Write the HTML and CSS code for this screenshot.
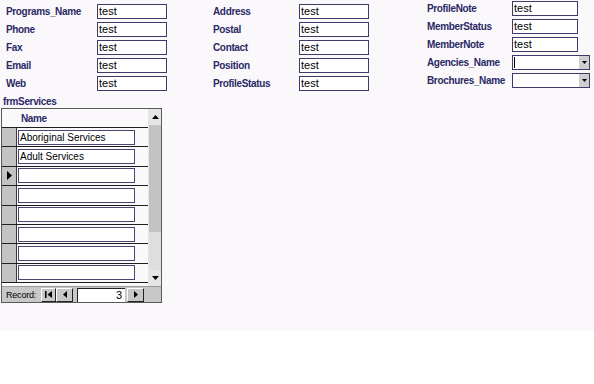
FILE: index.html
```html
<!DOCTYPE html>
<html>
<head>
    <title>Programs</title>
    <link rel="stylesheet" href="styles.css">
</head>
<body>
    <div class="page">
        <div class="fields">
            <div class="col col-a">
                <div class="lbl">Programs_Name</div><div class="box">test</div>
                <div class="lbl">Phone</div><div class="box">test</div>
                <div class="lbl">Fax</div><div class="box">test</div>
                <div class="lbl">Email</div><div class="box">test</div>
                <div class="lbl">Web</div><div class="box">test</div>
            </div>
            <div class="col col-b">
                <div class="lbl">Address</div><div class="box">test</div>
                <div class="lbl">Postal</div><div class="box">test</div>
                <div class="lbl">Contact</div><div class="box">test</div>
                <div class="lbl">Position</div><div class="box">test</div>
                <div class="lbl">ProfileStatus</div><div class="box">test</div>
            </div>
            <div class="col col-c">
                <div class="lbl">ProfileNote</div><div class="box">test</div>
                <div class="lbl">MemberStatus</div><div class="box">test</div>
                <div class="lbl">MemberNote</div><div class="box">test</div>
                <div class="lbl">Agencies_Name</div>
                <div class="combo">
                    <div class="combo-text"><span class="caret"></span></div>
                    <div class="combo-btn"><svg width="5" height="3" viewBox="0 0 5 3"><path d="M0 0h5L2.5 3z" fill="#000"/></svg></div>
                </div>
                <div class="lbl">Brochures_Name</div>
                <div class="combo">
                    <div class="combo-text"></div>
                    <div class="combo-btn"><svg width="5" height="3" viewBox="0 0 5 3"><path d="M0 0h5L2.5 3z" fill="#000"/></svg></div>
                </div>
            </div>
        </div>

        <div class="sub-title">frmServices</div>

        <div class="subform">
            <div class="sheet">
                <div class="rows">
                    <div class="row head">
                        <div class="sel"></div>
                        <div class="cell">Name</div>
                    </div>
                    <div class="row">
                        <div class="sel"></div>
                        <div class="cell"><div class="cbox">Aboriginal Services</div></div>
                    </div>
                    <div class="row">
                        <div class="sel"></div>
                        <div class="cell"><div class="cbox">Adult Services</div></div>
                    </div>
                    <div class="row">
                        <div class="sel current"><svg width="5" height="9" viewBox="0 0 5 9"><path d="M0 0L5 4.5L0 9z" fill="#000"/></svg></div>
                        <div class="cell"><div class="cbox"></div></div>
                    </div>
                    <div class="row">
                        <div class="sel"></div>
                        <div class="cell"><div class="cbox"></div></div>
                    </div>
                    <div class="row">
                        <div class="sel"></div>
                        <div class="cell"><div class="cbox"></div></div>
                    </div>
                    <div class="row">
                        <div class="sel"></div>
                        <div class="cell"><div class="cbox"></div></div>
                    </div>
                    <div class="row">
                        <div class="sel"></div>
                        <div class="cell"><div class="cbox"></div></div>
                    </div>
                    <div class="row">
                        <div class="sel"></div>
                        <div class="cell"><div class="cbox"></div></div>
                    </div>
                </div>
                <div class="vscroll">
                    <div class="sb-btn"><svg width="7" height="4" viewBox="0 0 7 4"><path d="M0 4h7L3.5 0z" fill="#000"/></svg></div>
                    <div class="sb-thumb"></div>
                    <div class="sb-track"></div>
                    <div class="sb-btn"><svg width="7" height="4" viewBox="0 0 7 4"><path d="M0 0h7L3.5 4z" fill="#000"/></svg></div>
                </div>
            </div>
            <div class="nav">
                <span class="nav-label">Record:</span>
                <div class="nav-btn first"><svg width="7" height="7" viewBox="0 0 7 7"><path d="M0 0h1.5v7H0z M7 0v7L2.5 3.5z" fill="#000"/></svg></div>
                <div class="nav-btn prev"><svg width="4" height="7" viewBox="0 0 4 7"><path d="M4 0v7L0 3.5z" fill="#000"/></svg></div>
                <div class="nav-num">3</div>
                <div class="nav-btn next"><svg width="4" height="7" viewBox="0 0 4 7"><path d="M0 0v7L4 3.5z" fill="#000"/></svg></div>
            </div>
        </div>
    </div>
</body>
</html>
```

FILE: styles.css
```css
body {
    margin: 0;
    background: #fff;
    font-family: "Liberation Sans", Arial, sans-serif;
    font-size: 11px;
    color: #000;
}
.page {
    height: 331px;
    background: #faf8fa;
    overflow: hidden;
}
.fields {
    display: flex;
    padding-left: 6px;
}
.col {
    display: grid;
    grid-auto-rows: 15px;
    row-gap: 3px;
    align-items: center;
}
.col-a {
    margin-top: 4px;
    grid-template-columns: 91px 70px;
}
.col-b {
    margin-top: 4px;
    margin-left: 46px;
    grid-template-columns: 86px 70px;
}
.col-c {
    margin-top: 1px;
    margin-left: 58px;
    grid-template-columns: 85px 78px;
}
.lbl {
    font-size: 10px;
    font-weight: bold;
    letter-spacing: -0.35px;
    color: #2b2966;
    white-space: nowrap;
}
.box {
    box-sizing: border-box;
    height: 15px;
    width: 70px;
    background: #fff;
    border: 1px solid #3f3a6a;
    padding-left: 1px;
    line-height: 13px;
}
.col-c .box {
    width: 66px;
}
.combo {
    box-sizing: border-box;
    height: 15px;
    display: flex;
    background: #fff;
    border: 1px solid #3f3a6a;
}
.combo-text {
    flex: 1;
    padding-left: 1px;
    display: flex;
    align-items: center;
}
.caret {
    width: 1px;
    height: 11px;
    background: #000;
}
.combo-btn {
    width: 10px;
    background: #cfcfcf;
    border-left: 1px solid #fff;
    display: flex;
    align-items: center;
    justify-content: center;
}
.sub-title {
    margin: 4px 0 0 3px;
    height: 13px;
    line-height: 13px;
    font-size: 10px;
    font-weight: bold;
    letter-spacing: -0.35px;
    color: #2b2966;
}
.subform {
    box-sizing: border-box;
    margin-left: 1px;
    width: 161px;
    height: 195px;
    border: 1px solid #5a5a5a;
    display: flex;
    flex-direction: column;
}
.sheet {
    flex: 1;
    display: flex;
    overflow: hidden;
}
.rows {
    flex: 1;
    overflow: hidden;
}
.row {
    box-sizing: border-box;
    height: 19.4px;
    display: flex;
    border-bottom: 1px solid #1e1e1e;
}
.row.head {
    height: 19px;
}
.sel {
    width: 14px;
    background: #c3c3c3;
    border-right: 1px solid #3a3a3a;
    display: flex;
    align-items: center;
    justify-content: center;
}
.head .sel {
    background: transparent;
    border-right-color: transparent;
}
.cell {
    flex: 1;
    display: flex;
    align-items: center;
    padding-left: 1px;
}
.head .cell {
    padding-left: 4px;
    font-size: 10px;
    font-weight: bold;
    letter-spacing: -0.35px;
    color: #2b2966;
}
.cbox {
    box-sizing: border-box;
    width: 117px;
    height: 15px;
    background: #fff;
    border: 1px solid #4a4670;
    padding-left: 1px;
    font-size: 10px;
    line-height: 13px;
}
.vscroll {
    width: 12px;
    display: flex;
    flex-direction: column;
    border-left: 1px solid #e8e8e8;
}
.sb-btn {
    height: 16px;
    background: #e6e4e6;
    display: flex;
    align-items: center;
    justify-content: center;
}
.sb-thumb {
    height: 107px;
    background: #c3c3c3;
}
.sb-track {
    flex: 1;
    background: #e0dde0;
}
.nav {
    height: 15px;
    background: #c8c8c8;
    display: flex;
    align-items: center;
    border-top: 1px solid #9a9a9a;
}
.nav-label {
    box-sizing: border-box;
    padding-left: 4px;
    width: 39px;
    font-size: 9px;
    letter-spacing: -0.2px;
}
.nav-btn {
    box-sizing: border-box;
    height: 14px;
    display: flex;
    align-items: center;
    justify-content: center;
    border-bottom: 1px solid #222;
    border-right: 1px solid #222;
    border-top: 1px solid #fff;
    border-left: 1px solid #fff;
}
.first {
    width: 15px;
}
.prev {
    width: 17px;
}
.next {
    width: 17px;
    margin-left: 2px;
}
.nav-num {
    box-sizing: border-box;
    margin-left: 4px;
    width: 48px;
    height: 14px;
    background: #fff;
    border-top: 1px solid #222;
    border-left: 1px solid #222;
    text-align: right;
    padding-right: 3px;
    line-height: 13px;
}
```
